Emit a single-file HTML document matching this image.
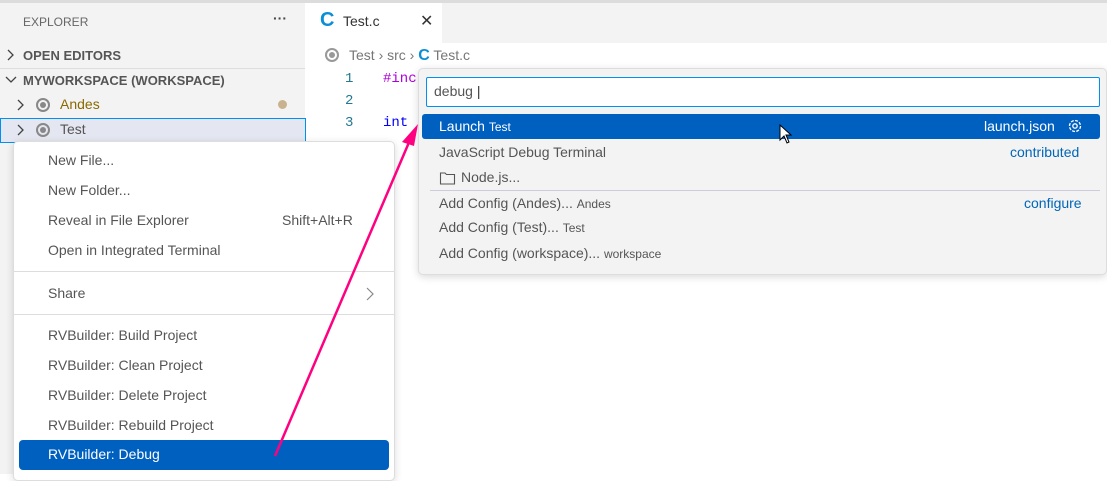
<!DOCTYPE html>
<html><head><meta charset="utf-8"><style>
*{margin:0;padding:0;box-sizing:border-box}
body{width:1107px;height:474px;overflow:hidden;background:#fff;font-family:"Liberation Sans",sans-serif;font-size:14px;color:#555;position:relative}
.a{position:absolute;white-space:nowrap}
</style></head><body>
<div class="a" style="left:0;top:0;width:1107px;height:3px;background:#dcdcdc"></div>
<div class="a" style="left:0;top:3px;width:305px;height:471px;background:#f3f3f3"></div>
<div class="a" style="left:305px;top:3px;width:802px;height:40px;background:#f3f3f3"></div>
<div class="a" style="left:305px;top:3px;width:137px;height:40px;background:#fff"></div>
<div class="a" style="left:23px;top:15px;font-size:12px;color:#666">EXPLORER</div>
<div class="a" style="left:273px;top:10px;font-size:14px;color:#444;font-weight:bold">···</div>
<svg class="a" style="left:6px;top:49px" width="10" height="12"><path d="M2 1 L7 6 L2 11" fill="none" stroke="#444" stroke-width="1.3"/></svg>
<div class="a" style="left:23px;top:48px;font-size:13px;font-weight:bold;color:#555">OPEN EDITORS</div>
<div class="a" style="left:0;top:68px;width:305px;height:1px;background:#ddd"></div>
<svg class="a" style="left:5px;top:75px" width="12" height="10"><path d="M1 2 L6 7 L11 2" fill="none" stroke="#444" stroke-width="1.3"/></svg>
<div class="a" style="left:23px;top:73px;font-size:13px;font-weight:bold;color:#555">MYWORKSPACE (WORKSPACE)</div>
<svg class="a" style="left:16px;top:99px" width="10" height="12"><path d="M2 1 L7 6 L2 11" fill="none" stroke="#444" stroke-width="1.3"/></svg>
<div class="a" style="left:36px;top:98px;width:14px;height:14px;border:2px solid #888;border-radius:50%"><div style="margin:2px;width:6px;height:6px;border-radius:50%;background:#888"></div></div>
<div class="a" style="left:60px;top:96px;color:#8a6a00">Andes</div>
<div class="a" style="left:278px;top:100px;width:9px;height:9px;border-radius:50%;background:#c9b38e"></div>
<div class="a" style="left:0;top:118px;width:306px;height:25px;background:#e4e6f1;border:1px solid #0090f1"></div>
<svg class="a" style="left:16px;top:124px" width="10" height="12"><path d="M2 1 L7 6 L2 11" fill="none" stroke="#444" stroke-width="1.3"/></svg>
<div class="a" style="left:36px;top:123px;width:14px;height:14px;border:2px solid #888;border-radius:50%"><div style="margin:2px;width:6px;height:6px;border-radius:50%;background:#888"></div></div>
<div class="a" style="left:60px;top:121px;color:#555">Test</div>
<div class="a" style="left:320px;top:9px;font-size:20px;font-weight:bold;color:#0a8fd6">C</div>
<div class="a" style="left:343px;top:13px;color:#333">Test.c</div>
<div class="a" style="left:420px;top:11px;font-size:16px;color:#333">✕</div>
<div class="a" style="left:325px;top:48px;width:14px;height:14px;border:2px solid #999;border-radius:50%"><div style="margin:2px;width:6px;height:6px;border-radius:50%;background:#999"></div></div>
<div class="a" style="left:349px;top:47px;color:#777">Test › src › <b style="color:#0a8fd6;font-size:16px">C</b> Test.c</div>
<div class="a" style="left:345px;top:71px;color:#237893;font-family:'Liberation Mono',monospace">1</div>
<div class="a" style="left:345px;top:93px;color:#237893;font-family:'Liberation Mono',monospace">2</div>
<div class="a" style="left:345px;top:115px;color:#237893;font-family:'Liberation Mono',monospace">3</div>
<div class="a" style="left:383px;top:71px;color:#af00db;font-family:'Liberation Mono',monospace">#inc</div>
<div class="a" style="left:383px;top:115px;color:#0000ff;font-family:'Liberation Mono',monospace">int</div>
<div class="a" style="left:13px;top:141px;width:382px;height:340px;background:#fff;border:1px solid #ddd;border-radius:5px;box-shadow:0 2px 8px rgba(0,0,0,.15)"></div>
<div class="a" style="left:48px;top:152px">New File...</div>
<div class="a" style="left:48px;top:182px">New Folder...</div>
<div class="a" style="left:48px;top:212px">Reveal in File Explorer</div>
<div class="a" style="left:282px;top:212px">Shift+Alt+R</div>
<div class="a" style="left:48px;top:242px">Open in Integrated Terminal</div>
<div class="a" style="left:14px;top:271px;width:380px;height:1px;background:#ddd"></div>
<div class="a" style="left:48px;top:285px">Share</div>
<svg class="a" style="left:365px;top:287px" width="10" height="14"><path d="M2 1 L8 7 L2 13" fill="none" stroke="#888" stroke-width="1.2"/></svg>
<div class="a" style="left:14px;top:314px;width:380px;height:1px;background:#ddd"></div>
<div class="a" style="left:48px;top:327px">RVBuilder: Build Project</div>
<div class="a" style="left:48px;top:357px">RVBuilder: Clean Project</div>
<div class="a" style="left:48px;top:387px">RVBuilder: Delete Project</div>
<div class="a" style="left:48px;top:417px">RVBuilder: Rebuild Project</div>
<div class="a" style="left:19px;top:440px;width:370px;height:30px;background:#0060c0;border-radius:4px"></div>
<div class="a" style="left:48px;top:446px;color:#fff">RVBuilder: Debug</div>
<div class="a" style="left:418px;top:68px;width:689px;height:207px;background:#f3f3f3;border:1px solid #ddd;border-radius:5px;box-shadow:0 2px 8px rgba(0,0,0,.15)"></div>
<div class="a" style="left:426px;top:77px;width:674px;height:30px;background:#fff;border:1px solid #0090f1;border-radius:2px"></div>
<div class="a" style="left:434px;top:83px;color:#555">debug <span style="color:#333">|</span></div>
<div class="a" style="left:422px;top:114px;width:678px;height:25px;background:#0060c0;border-radius:3px"></div>
<div class="a" style="left:439px;top:118px;color:#fff">Launch <span style="font-size:12px">Test</span></div>
<div class="a" style="left:984px;top:118px;color:#fff">launch.json</div>
<svg class="a" style="left:1066px;top:117px" width="18" height="18" viewBox="0 0 18 18"><circle cx="9" cy="9" r="5.5" fill="none" stroke="#fff" stroke-width="1.3" stroke-dasharray="3 1.3"/><circle cx="9" cy="9" r="2.2" fill="none" stroke="#fff" stroke-width="1.3"/></svg>
<div class="a" style="left:439px;top:144px">JavaScript Debug Terminal</div>
<div class="a" style="left:1010px;top:144px;color:#0066b8">contributed</div>
<svg class="a" style="left:439px;top:170px" width="18" height="16"><path d="M1.5 3 H6 L7.5 4.5 H15.5 V14 H1.5 Z" fill="none" stroke="#555" stroke-width="1.1"/></svg>
<div class="a" style="left:461px;top:169px">Node.js...</div>
<div class="a" style="left:430px;top:190px;width:670px;height:1px;background:#ccd"></div>
<div class="a" style="left:439px;top:195px">Add Config (Andes)... <span style="font-size:12px">Andes</span></div>
<div class="a" style="left:1024px;top:195px;color:#0066b8">configure</div>
<div class="a" style="left:439px;top:219px">Add Config (Test)... <span style="font-size:12px">Test</span></div>
<div class="a" style="left:439px;top:245px">Add Config (workspace)... <span style="font-size:12px">workspace</span></div>
<svg class="a" style="left:779px;top:124px" width="16" height="22" viewBox="0 0 16 22"><path d="M1 1 L1 16 L5 12 L8 19 L10 18 L7 11 L12 11 Z" fill="#fff" stroke="#000" stroke-width="1"/></svg>
<svg class="a" style="left:0;top:0" width="1107" height="474"><line x1="275" y1="456" x2="410" y2="140" stroke="#ff0080" stroke-width="2.5"/><path d="M418 124 L402 142 L414 146 Z" fill="#ff0080"/></svg>
</body></html>
